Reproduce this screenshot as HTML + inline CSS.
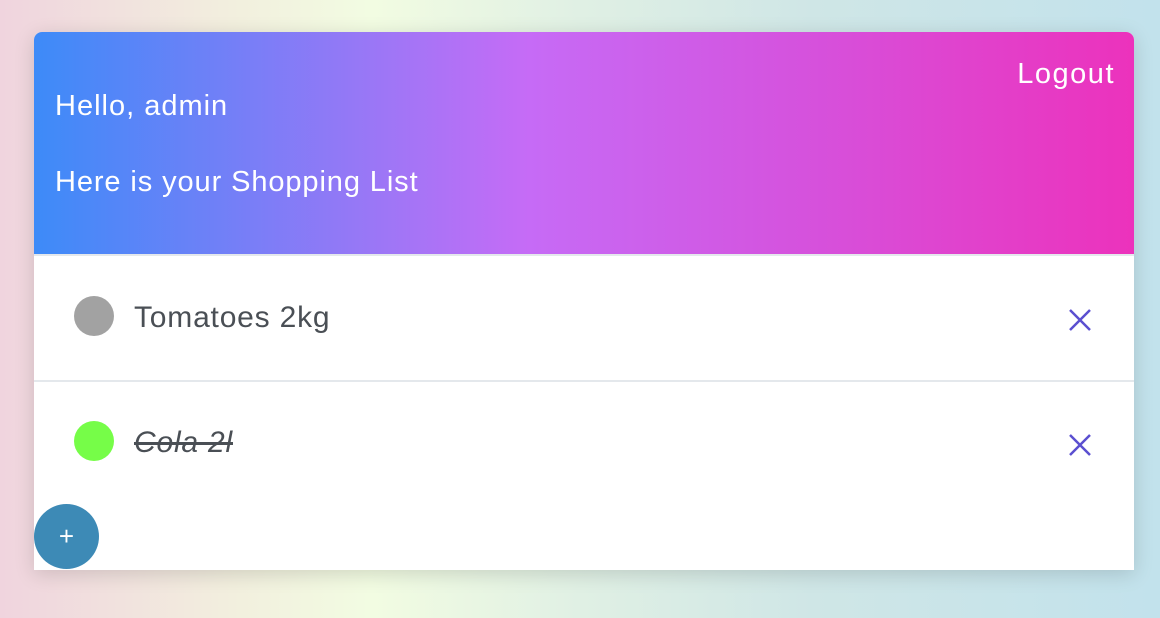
<!DOCTYPE html>
<html><head><style>
html,body{margin:0;width:1160px;height:618px;overflow:hidden;font-family:"Liberation Sans",sans-serif;}
body{background:linear-gradient(90deg,#f0d4de 0%,#f2efde 20%,#f2fce2 32%,#e0f0e4 50%,#cfe6e6 70%,#c2e2ec 100%);position:relative}
.card{position:absolute;left:34px;top:32px;width:1100px;height:538px;background:#fff;border-radius:8px 8px 0 0;box-shadow:0 4px 20px rgba(0,0,0,0.15)}
.head{height:222px;border-radius:8px 8px 0 0;background:linear-gradient(90deg,#3d8bf8 0%,#a774f6 35%,#c66bf6 45%,#d552dd 70%,#ec32bc 100%);color:#fff;position:relative;border-bottom:2px solid #e4e8ec}
.head div{position:absolute;font-size:29px;font-weight:300;letter-spacing:1px}
.row{position:absolute;left:0;width:1100px;height:124px}
.dot{position:absolute;left:40px;width:40px;height:40px;border-radius:50%}
.txt{position:absolute;left:100px;font-size:30px;color:#4a4f55;font-weight:300;letter-spacing:0.8px}
.x{position:absolute;left:1034px;width:24px;height:24px}
</style></head><body>
<div class="card">
<div class="head">
<div style="left:21px;top:58px">Hello, admin</div>
<div style="left:21px;top:134px;letter-spacing:0.9px">Here is your Shopping List</div>
<div style="right:19px;top:26px;letter-spacing:1.5px">Logout</div>
</div>
<div class="row" style="top:224px;border-bottom:2px solid #e4e8ec">
<div class="dot" style="top:40px;background:#a2a2a2"></div>
<div class="txt" style="top:45px">Tomatoes 2kg</div>
<svg class="x" style="top:52px" viewBox="0 0 24 24"><path d="M2 2L22 22M22 2L2 22" stroke="#5b4fd0" stroke-width="2.5"/></svg>
</div>
<div class="row" style="top:350px">
<div class="dot" style="top:39px;background:#76fd48"></div>
<div class="txt" style="top:44px;font-style:italic;text-decoration:line-through">Cola 2l</div>
<svg class="x" style="top:51px" viewBox="0 0 24 24"><path d="M2 2L22 22M22 2L2 22" stroke="#5b4fd0" stroke-width="2.5"/></svg>
</div>
</div>
<div style="position:absolute;left:34px;top:504px;width:65px;height:65px;border-radius:50%;background:#3d8ab6;color:#fff;font-size:26px;text-align:center;line-height:65px">+</div>
</body></html>
